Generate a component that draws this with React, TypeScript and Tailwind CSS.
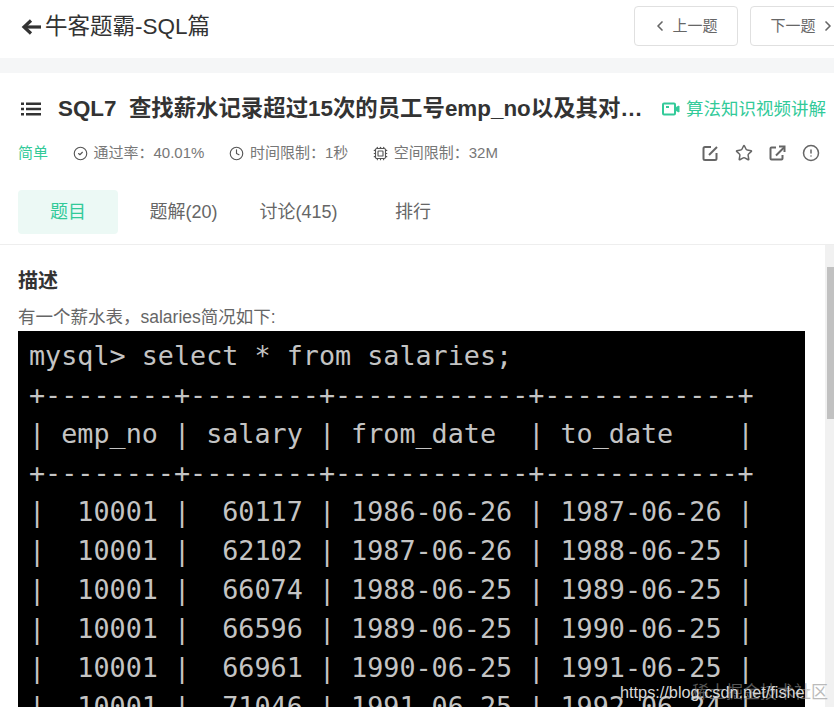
import { ChevronLeft, ChevronRight, CircleAlert, CircleCheck, Clock, Cpu, Star } from 'lucide-react'

const FONT = { fontFamily: '"Liberation Sans", "Noto Sans CJK SC", sans-serif' }

const TERMINAL = [
  'mysql> select * from salaries;',
  '+--------+--------+------------+------------+',
  '| emp_no | salary | from_date  | to_date    |',
  '+--------+--------+------------+------------+',
  '|  10001 |  60117 | 1986-06-26 | 1987-06-26 |',
  '|  10001 |  62102 | 1987-06-26 | 1988-06-25 |',
  '|  10001 |  66074 | 1988-06-25 | 1989-06-25 |',
  '|  10001 |  66596 | 1989-06-25 | 1990-06-25 |',
  '|  10001 |  66961 | 1990-06-25 | 1991-06-25 |',
  '|  10001 |  71046 | 1991-06-25 | 1992-06-24 |',
]

const META = [
  { icon: CircleCheck, label: '通过率：40.01%' },
  { icon: Clock, label: '时间限制：1秒' },
  { icon: Cpu, label: '空间限制：32M' },
]

const TABS = [
  { label: '题解(20)', className: 'ml-[32px] w-[67px]' },
  { label: '讨论(415)', className: 'ml-[43px] w-[77px]' },
  { label: '排行', className: 'ml-[58px] w-[36px]' },
]

function BackArrow() {
  return (
    <svg width="20" height="18" viewBox="0 0 20 18" fill="none" stroke="#333" strokeWidth="3.2" className="shrink-0">
      <path d="M3 9h17" />
      <path d="M10 2.5 3 9l7 6.5" />
    </svg>
  )
}

function ListIcon() {
  return (
    <svg width="20" height="14" viewBox="0 0 20 14" className="shrink-0" fill="#333">
      <rect x="0" y="0.5" width="3" height="2.5" />
      <rect x="5" y="0.5" width="15" height="2.5" />
      <rect x="0" y="5.75" width="3" height="2.5" />
      <rect x="5" y="5.75" width="15" height="2.5" />
      <rect x="0" y="11" width="3" height="2.5" />
      <rect x="5" y="11" width="15" height="2.5" />
    </svg>
  )
}

function VideoIcon() {
  return (
    <svg width="18" height="14" viewBox="0 0 18 14" fill="none" stroke="#32ca99" strokeWidth="2" className="shrink-0">
      <rect x="1" y="1.5" width="12" height="11" rx="1" />
      <path d="M4 5h3" />
      <path d="M14 5.5 17 4v6l-3-1.5z" fill="#32ca99" strokeWidth="1" />
    </svg>
  )
}

function EditIcon() {
  return (
    <svg width="17" height="17" viewBox="0 0 17 17" fill="none" stroke="#666" strokeWidth="2">
      <path d="M9 2H3a1.5 1.5 0 0 0-1.5 1.5v10A1.5 1.5 0 0 0 3 15h10a1.5 1.5 0 0 0 1.5-1.5V8" />
      <path d="M7 10 15 2" />
    </svg>
  )
}

function ShareIcon() {
  return (
    <svg width="17" height="17" viewBox="0 0 17 17" fill="none" stroke="#666" strokeWidth="2">
      <path d="M7 2.5H2.5a1 1 0 0 0-1 1v10a1 1 0 0 0 1 1h10a1 1 0 0 0 1-1V10" />
      <path d="M7 10.5 15 2.5" />
      <path d="M10 1.5h5.5V7" />
    </svg>
  )
}

export default function App() {
  return (
    <div className="relative flex h-[707px] w-[834px] flex-col overflow-hidden bg-white" style={FONT}>
      {/* Top bar */}
      <header className="flex h-[58px] shrink-0 items-start">
        <div className="flex h-[53px] items-center pl-[21px]">
          <BackArrow />
          <span className="ml-[4px] text-[22.5px] text-[#333]">牛客题霸-SQL篇</span>
        </div>
        <div className="ml-auto mt-[6px] flex gap-[12px] pl-[12px]">
          <button className="flex h-[40px] w-[104px] items-center justify-center gap-[4px] rounded border border-[#e0e0e0] pr-[2px] text-[15px] text-[#666]">
            <ChevronLeft size={16} strokeWidth={2.5} />
            上一题
          </button>
          <button className="-mr-[20px] flex h-[40px] w-[104px] items-center justify-center gap-[4px] rounded border border-[#e0e0e0] pl-[2px] text-[15px] text-[#666]">
            下一题
            <ChevronRight size={16} strokeWidth={2.5} />
          </button>
        </div>
      </header>
      <div className="h-[15px] shrink-0 bg-[#f5f6f7]" />

      {/* Title */}
      <div className="flex h-[72px] shrink-0 items-center pl-[21px] pr-[8px]">
        <ListIcon />
        <h1 className="ml-[17px] w-[587px] truncate text-[22.4px] font-bold text-[#333]">
          SQL7&nbsp; 查找薪水记录超过15次的员工号emp_no以及其对应的涨幅次数t
        </h1>
        <span className="ml-[17px]"><VideoIcon /></span>
        <span className="ml-[6px] whitespace-nowrap text-[17.5px] text-[#32ca99]">算法知识视频讲解</span>
      </div>

      {/* Meta */}
      <div className="mt-[1px] flex h-[14px] shrink-0 items-center pl-[18px] pr-[14px] text-[15px] text-[#777]">
        <span className="mr-[24.5px] text-[#32ca99]">简单</span>
        {META.map(item => (
          <span key={item.label} className="mr-[24.5px] flex items-center gap-[6px]">
            <item.icon size={15} strokeWidth={1.8} className="text-[#555]" />
            {item.label}
          </span>
        ))}
        <div className="ml-auto flex items-center gap-[16px] text-[#666]">
          <EditIcon />
          <Star size={18} strokeWidth={2} />
          <ShareIcon />
          <CircleAlert size={18} strokeWidth={2} />
        </div>
      </div>

      {/* Tabs */}
      <div className="mt-[30px] flex h-[55px] shrink-0 items-start border-b border-[#eee] pl-[18px] text-[18px] text-[#666]">
        <div className="flex h-[44px] w-[100px] items-center justify-center rounded bg-[#ecf9f5] text-[#32ca99]">题目</div>
        {TABS.map(tab => (
          <div key={tab.label} className={`flex h-[44px] items-center justify-center whitespace-nowrap ${tab.className}`}>
            {tab.label}
          </div>
        ))}
      </div>

      {/* Description */}
      <div className="flex min-h-0 flex-1">
        <main className="min-w-0 flex-1 pl-[18px] pr-[20px] pt-[22px]">
          <h2 className="text-[20px] leading-[28px] font-bold text-[#333]">描述</h2>
          <p className="mt-[11px] text-[17.5px] leading-[22px] text-[#666]">有一个薪水表，salaries简况如下:</p>
          <pre
            className="mt-[3px] overflow-hidden bg-black pl-[11px] pt-[5px] text-[26.75px] leading-[39px] text-[#c4c4c4]"
            style={{ fontFamily: '"DejaVu Sans Mono", monospace' }}
          >
            {TERMINAL.join('\n')}
          </pre>
        </main>
        <div className="flex w-[9px] shrink-0 flex-col bg-[#f1f1f1] pt-[22px]">
          <div className="ml-[2px] h-[152px] bg-[#c1c1c1]" />
        </div>
      </div>

      {/* Watermark */}
      <span className="absolute right-[6px] top-[680px] text-[17px] text-[#8f8f8f] opacity-60">稀土掘金技术社区</span>
      <span className="absolute left-[620px] top-[680px] text-[16.3px] text-[#d8d8d8]">https://blog.csdn.net/fisher</span>
    </div>
  )
}
